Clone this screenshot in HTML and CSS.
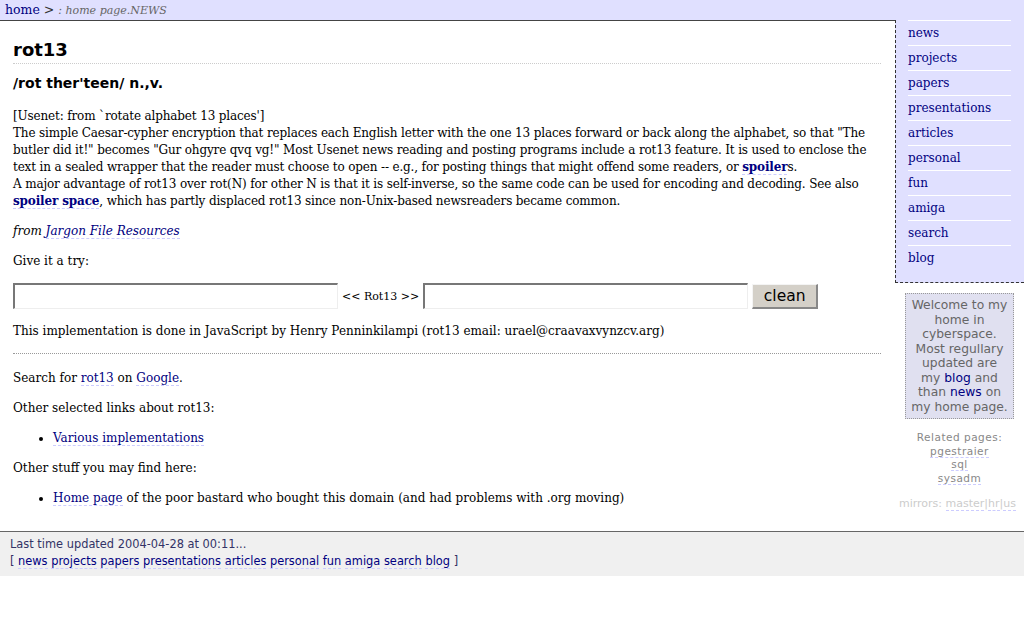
FILE: index.html
```html
<!DOCTYPE html>
<html lang="en">
<head>
  <meta charset="UTF-8" />
  <title>rot13</title>
  <link rel="stylesheet" href="styles.css">
</head>
<body>

  <div class="crumbs">
    <a href="#">home</a> <span class="sep">&gt;</span> <em>: home page.NEWS</em>
  </div>

  <div class="wrap">
    <div class="main">
      <h1>rot13</h1>
      <p class="pron">/rot ther'teen/ n.,v.</p>

      <p class="entry">
        [Usenet: from `rotate alphabet 13 places']<br>
        The simple Caesar-cypher encryption that replaces each English letter with the one 13 places forward or back along the alphabet, so that "The butler did it!" becomes "Gur ohgyre qvq vg!" Most Usenet news reading and posting programs include a rot13 feature. It is used to enclose the text in a sealed wrapper that the reader must choose to open -- e.g., for posting things that might offend some readers, or <a class="strong" href="#">spoiler</a>s.<br>
        A major advantage of rot13 over rot(N) for other N is that it is self-inverse, so the same code can be used for encoding and decoding. See also <a class="strong" href="#">spoiler space</a>, which has partly displaced rot13 since non-Unix-based newsreaders became common.
      </p>

      <p><em>from <a href="#">Jargon File Resources</a></em></p>

      <p>Give it a try:</p>

      <form class="rot-form" onsubmit="return false">
        <input type="text" id="plain" oninput="convert('plain', 'coded')" />
        <span class="arrows">&lt;&lt; Rot13 &gt;&gt;</span>
        <input type="text" id="coded" oninput="convert('coded', 'plain')" />
        <button type="button" onclick="clean()">clean</button>
      </form>

      <p class="credit">This implementation is done in JavaScript by Henry Penninkilampi (rot13 email: urael@craavaxvynzcv.arg)</p>

      <hr>

      <p>Search for <a href="#">rot13</a> on <a href="#">Google</a>.</p>

      <p>Other selected links about rot13:</p>
      <ul>
        <li><a href="#">Various implementations</a></li>
      </ul>

      <p>Other stuff you may find here:</p>
      <ul>
        <li><a href="#">Home page</a> of the poor bastard who bought this domain (and had problems with .org moving)</li>
      </ul>
    </div>

    <div class="side">
      <div class="menu">
        <a href="#">news</a>
        <a href="#">projects</a>
        <a href="#">papers</a>
        <a href="#">presentations</a>
        <a href="#">articles</a>
        <a href="#">personal</a>
        <a href="#">fun</a>
        <a href="#">amiga</a>
        <a href="#">search</a>
        <a href="#">blog</a>
      </div>

      <div class="welcome">
        Welcome to my home in cyberspace. Most regullary updated are my <a href="#">blog</a> and than <a href="#">news</a> on my home page.
      </div>

      <div class="related">
        Related pages:<br>
        <a href="#">pgestraier</a><br>
        <a href="#">sql</a><br>
        <a href="#">sysadm</a>
      </div>

      <div class="mirrors">
        mirrors: <a href="#">master</a>|<a href="#">hr</a>|<a href="#">us</a>
      </div>
    </div>
  </div>

  <div class="footer">
    Last time updated 2004-04-28 at 00:11...<br>
    [ <a href="#">news</a> <a href="#">projects</a> <a href="#">papers</a> <a href="#">presentations</a> <a href="#">articles</a> <a href="#">personal</a> <a href="#">fun</a> <a href="#">amiga</a> <a href="#">search</a> <a href="#">blog</a> ]
  </div>

  <script>
  function rot13(s) {
    return s.replace(/[a-zA-Z]/g, function (c) {
      var base = c <= 'Z' ? 65 : 97;
      return String.fromCharCode((c.charCodeAt(0) - base + 13) % 26 + base);
    });
  }

  function convert(from, to) {
    document.getElementById(to).value = rot13(document.getElementById(from).value);
  }

  function clean() {
    document.getElementById('plain').value = '';
    document.getElementById('coded').value = '';
  }
</script>

</body>
</html>
```

FILE: styles.css
```css
body {
  margin: 0;
  background: #fff;
  color: #000;
  font-family: "DejaVu Serif", Georgia, serif;
  font-size: 12px;
}

a {
  color: #000080;
  text-decoration: none;
  border-bottom: 1px dashed #ccccff;
}

a.strong {
  font-weight: bold;
}

/* breadcrumb bar */
.crumbs {
  height: 20px;
  line-height: 19px;
  padding-left: 5px;
  background: #e0e0ff;
  color: #666;
  font-size: 12.5px;
}

.crumbs a {
  border: none;
}

.crumbs .sep {
  color: #333;
}

.crumbs em {
  font-size: 11px;
}

.wrap {
  display: flex;
  align-items: flex-start;
}

/* main column */
.main {
  flex: 1;
  border-top: 1px solid #444;
  padding: 0 14px 11px 13px;
}

.main p {
  margin: 13px 0;
  line-height: 17px;
}

h1 {
  margin: 16px 0 0;
  padding-bottom: 1px;
  font-family: "DejaVu Sans", Verdana, sans-serif;
  font-size: 18px;
  line-height: 25px;
  border-bottom: 1px dotted #ccc;
}

.main p.pron {
  margin: 6px 0 0;
  font-family: "DejaVu Sans", Verdana, sans-serif;
  font-weight: bold;
  font-size: 14px;
  line-height: 26px;
}

.main p.entry {
  margin-top: 12px;
  line-height: 17px;
  letter-spacing: -0.15px;
}

.rot-form {
  display: flex;
  align-items: center;
  gap: 4px;
  margin: 5px 0 0;
}

.rot-form input {
  box-sizing: border-box;
  width: 325px;
  height: 26px;
  margin: 0;
  padding: 2px;
  border-style: solid;
  border-width: 2px 1px 1px 2px;
  border-color: #777 #eee #eee #777;
  font-size: 13px;
}

.arrows {
  font-size: 11px;
}

.rot-form button {
  box-sizing: border-box;
  width: 66px;
  height: 25px;
  margin-left: 0;
  padding: 0;
  background: #d4d0c8;
  border-style: solid;
  border-width: 1px 2px 2px 1px;
  border-color: #f4f4f4 #888 #888 #f4f4f4;
  font-family: "DejaVu Sans", Tahoma, sans-serif;
  font-size: 15.5px;
  color: #000;
}

.main p.credit {
  margin-top: 14px;
}

hr {
  height: 0;
  margin: 13px 0 16px;
  border: none;
  border-top: 1px dotted #999;
}

ul {
  margin: 13px 0;
  padding-left: 40px;
  line-height: 17px;
}

/* right column */
.side {
  width: 129px;
  font-family: "DejaVu Sans", Verdana, sans-serif;
}

.menu {
  display: flex;
  flex-direction: column;
  padding: 0 13px 12px 12px;
  background: #e0e0ff;
  border-left: 1px dashed #333;
  border-bottom: 1px dashed #333;
}

.menu a {
  height: 24px;
  line-height: 24px;
  border: none;
  border-top: 1px solid #fff;
  font-family: "DejaVu Serif", Georgia, serif;
  font-size: 12px;
}

.welcome {
  margin: 10px 10px 0 10px;
  padding: 4px 4.5px 4px;
  background: #e0e0f0;
  border: 1px dotted #999;
  color: #666;
  font-size: 12.3px;
  line-height: 14.5px;
  text-align: center;
}

.welcome a {
  border: none;
}

.related {
  margin-top: 12px;
  color: #888;
  font-size: 10.5px;
  line-height: 13.5px;
  letter-spacing: 0.5px;
  text-align: center;
}

.related a {
  color: #888;
}

.mirrors {
  margin-top: 12px;
  padding-right: 8px;
  color: #ccc;
  font-size: 11px;
  text-align: right;
}

.mirrors a {
  color: #ccc;
}

/* footer */
.footer {
  padding: 4px 10px 6px;
  background: #f0f0f0;
  border-top: 1px solid #666;
  color: #333366;
  font-family: "DejaVu Sans", Tahoma, sans-serif;
  font-size: 11.4px;
  line-height: 17px;
}
```
